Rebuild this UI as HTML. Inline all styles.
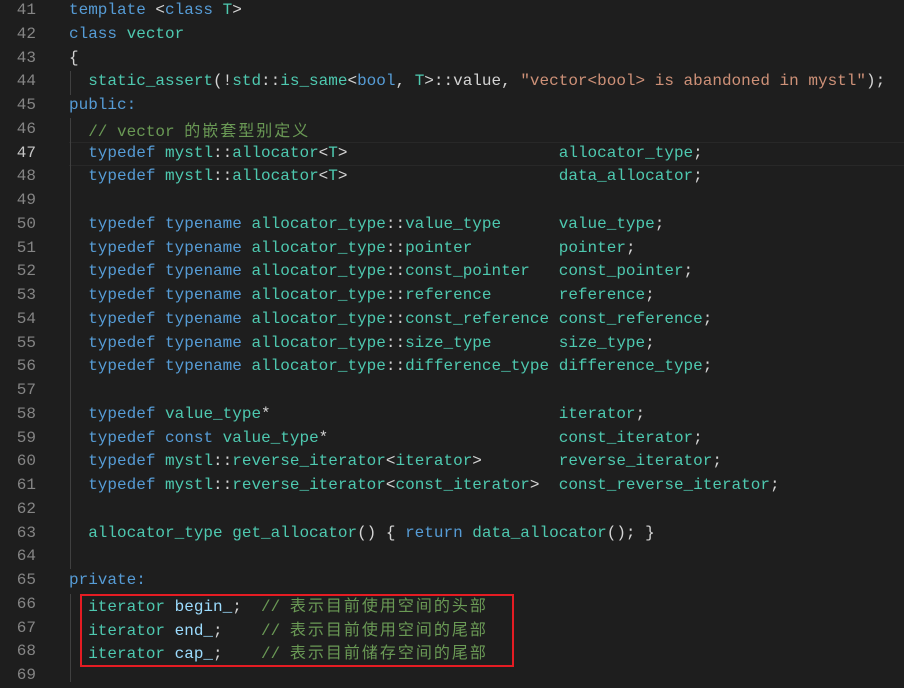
<!DOCTYPE html><html><head><meta charset="utf-8"><style>
body{margin:0;background:#1e1e1e;width:904px;height:682px;overflow:hidden;position:relative;font-family:"Liberation Mono","Noto Sans CJK SC",monospace;font-size:16px;color:#d4d4d4}
.l{position:absolute;left:0;height:23.75px;line-height:23.75px;white-space:pre;width:904px}
.n{position:absolute;left:0;width:36px;text-align:right;color:#858585}
.c{position:absolute;left:69px}
.k{color:#569cd6}.t{color:#4ec9b0}.s{color:#ce9178}.m{color:#6a9955}.v{color:#9cdcfe}
.z{letter-spacing:2px;font-family:"Noto Sans CJK SC",sans-serif}
.g{position:absolute;left:70px;width:1px;background:#404040}
</style></head><body>
<div style="position:absolute;left:69px;top:142px;width:835px;height:22px;border-top:1px solid #282828;border-bottom:1px solid #282828"></div>
<div class="g" style="top:71px;height:24px"></div>
<div class="g" style="top:118px;height:451px"></div>
<div class="g" style="top:594px;height:88px"></div>
<div style="position:absolute;left:80px;top:594px;width:430px;height:69px;border:2px solid #e51c23"></div>
<div class="l" style="top:-1px"><span class="n">41</span><span class="c"><span class="k">template</span> &lt;<span class="k">class</span> <span class="t">T</span>&gt;</span></div>
<div class="l" style="top:22.75px"><span class="n">42</span><span class="c"><span class="k">class</span> <span class="t">vector</span></span></div>
<div class="l" style="top:46.5px"><span class="n">43</span><span class="c">{</span></div>
<div class="l" style="top:70.25px"><span class="n">44</span><span class="c">  <span class="t">static_assert</span>(!<span class="t">std</span>::<span class="t">is_same</span>&lt;<span class="k">bool</span>, <span class="t">T</span>&gt;::value, <span class="s">"vector&lt;bool&gt; is abandoned in mystl"</span>);</span></div>
<div class="l" style="top:94px"><span class="n">45</span><span class="c"><span class="k">public:</span></span></div>
<div class="l" style="top:117.75px"><span class="n">46</span><span class="c">  <span class="m">// vector <span class="z">的嵌套型别定义</span></span></span></div>
<div class="l" style="top:141.5px"><span class="n" style="color:#c6c6c6">47</span><span class="c">  <span class="k">typedef</span> <span class="t">mystl</span>::<span class="t">allocator</span>&lt;<span class="t">T</span>&gt;                      <span class="t">allocator_type</span>;</span></div>
<div class="l" style="top:165.25px"><span class="n">48</span><span class="c">  <span class="k">typedef</span> <span class="t">mystl</span>::<span class="t">allocator</span>&lt;<span class="t">T</span>&gt;                      <span class="t">data_allocator</span>;</span></div>
<div class="l" style="top:189px"><span class="n">49</span></div>
<div class="l" style="top:212.75px"><span class="n">50</span><span class="c">  <span class="k">typedef</span> <span class="k">typename</span> <span class="t">allocator_type</span>::<span class="t">value_type</span>      <span class="t">value_type</span>;</span></div>
<div class="l" style="top:236.5px"><span class="n">51</span><span class="c">  <span class="k">typedef</span> <span class="k">typename</span> <span class="t">allocator_type</span>::<span class="t">pointer</span>         <span class="t">pointer</span>;</span></div>
<div class="l" style="top:260.25px"><span class="n">52</span><span class="c">  <span class="k">typedef</span> <span class="k">typename</span> <span class="t">allocator_type</span>::<span class="t">const_pointer</span>   <span class="t">const_pointer</span>;</span></div>
<div class="l" style="top:284px"><span class="n">53</span><span class="c">  <span class="k">typedef</span> <span class="k">typename</span> <span class="t">allocator_type</span>::<span class="t">reference</span>       <span class="t">reference</span>;</span></div>
<div class="l" style="top:307.75px"><span class="n">54</span><span class="c">  <span class="k">typedef</span> <span class="k">typename</span> <span class="t">allocator_type</span>::<span class="t">const_reference</span> <span class="t">const_reference</span>;</span></div>
<div class="l" style="top:331.5px"><span class="n">55</span><span class="c">  <span class="k">typedef</span> <span class="k">typename</span> <span class="t">allocator_type</span>::<span class="t">size_type</span>       <span class="t">size_type</span>;</span></div>
<div class="l" style="top:355.25px"><span class="n">56</span><span class="c">  <span class="k">typedef</span> <span class="k">typename</span> <span class="t">allocator_type</span>::<span class="t">difference_type</span> <span class="t">difference_type</span>;</span></div>
<div class="l" style="top:379px"><span class="n">57</span></div>
<div class="l" style="top:402.75px"><span class="n">58</span><span class="c">  <span class="k">typedef</span> <span class="t">value_type</span>*                              <span class="t">iterator</span>;</span></div>
<div class="l" style="top:426.5px"><span class="n">59</span><span class="c">  <span class="k">typedef</span> <span class="k">const</span> <span class="t">value_type</span>*                        <span class="t">const_iterator</span>;</span></div>
<div class="l" style="top:450.25px"><span class="n">60</span><span class="c">  <span class="k">typedef</span> <span class="t">mystl</span>::<span class="t">reverse_iterator</span>&lt;<span class="t">iterator</span>&gt;        <span class="t">reverse_iterator</span>;</span></div>
<div class="l" style="top:474px"><span class="n">61</span><span class="c">  <span class="k">typedef</span> <span class="t">mystl</span>::<span class="t">reverse_iterator</span>&lt;<span class="t">const_iterator</span>&gt;  <span class="t">const_reverse_iterator</span>;</span></div>
<div class="l" style="top:497.75px"><span class="n">62</span></div>
<div class="l" style="top:521.5px"><span class="n">63</span><span class="c">  <span class="t">allocator_type</span> <span class="t">get_allocator</span>() { <span class="k">return</span> <span class="t">data_allocator</span>(); }</span></div>
<div class="l" style="top:545.25px"><span class="n">64</span></div>
<div class="l" style="top:569px"><span class="n">65</span><span class="c"><span class="k">private:</span></span></div>
<div class="l" style="top:592.75px"><span class="n">66</span><span class="c">  <span class="t">iterator</span> <span class="v">begin_</span>;  <span class="m">// <span class="z">表示目前使用空间的头部</span></span></span></div>
<div class="l" style="top:616.5px"><span class="n">67</span><span class="c">  <span class="t">iterator</span> <span class="v">end_</span>;    <span class="m">// <span class="z">表示目前使用空间的尾部</span></span></span></div>
<div class="l" style="top:640.25px"><span class="n">68</span><span class="c">  <span class="t">iterator</span> <span class="v">cap_</span>;    <span class="m">// <span class="z">表示目前储存空间的尾部</span></span></span></div>
<div class="l" style="top:664px"><span class="n">69</span></div>
</body></html>
